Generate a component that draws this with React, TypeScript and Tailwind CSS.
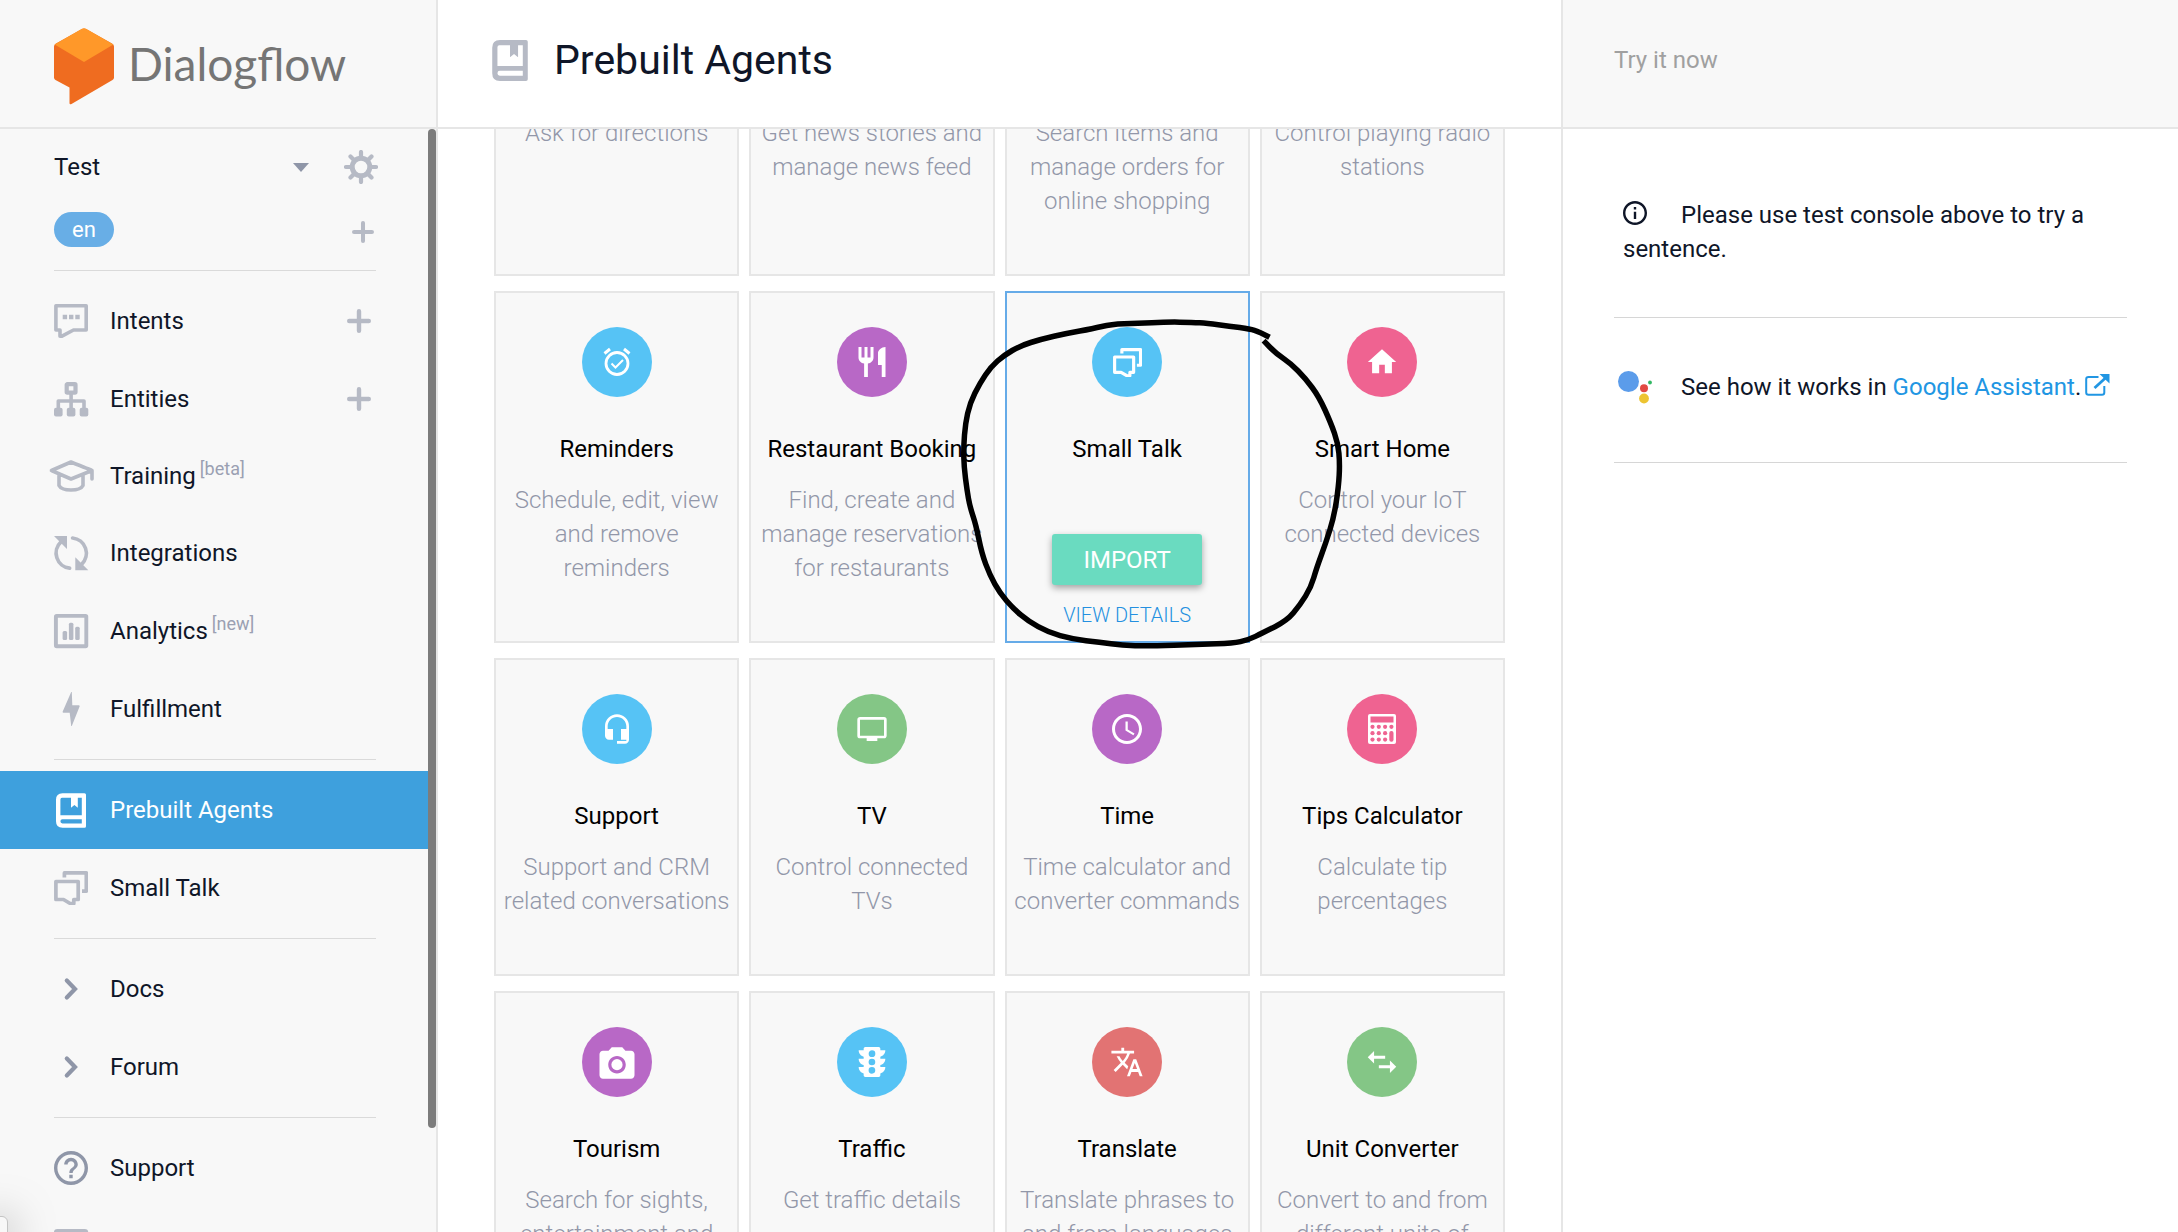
import type { ReactNode } from "react";
import {
  MdHeadsetMic,
  MdHelpOutline,
  MdHome,
  MdInfoOutline,
  MdPersonalVideo,
  MdPhotoCamera,
  MdRestaurant,
  MdSchedule,
  MdSwapHoriz,
  MdTraffic,
  MdTranslate,
} from "react-icons/md";

/* ---------- Icons ---------- */

function LogoMark() {
  return (
    <svg viewBox="0 0 60 87" className="h-[87px] w-[60px] shrink-0" aria-hidden="true">
      <path
        d="M2 25.5 28 11Q30 10 32 11L58 25.5Q60 26.500 60 28.500V59.500Q60 61 58.500 62L17.500 86Q15.500 87 15.500 85V69.500L1.500 62Q0 61 0 59.500V28.500Q0 26.500 2 25.500Z"
        fill="#ef6c20"
      />
      <path d="M.6 26.600 27.500 10.900Q30 9.500 32.500 10.900L59.400 26.600 30 44Z" fill="#ff9829" />
    </svg>
  );
}

function GearIcon() {
  return (
    <svg viewBox="-17 -17 34 34" className="size-[34px]" fill="none" stroke="currentColor" aria-hidden="true">
      <circle r="8.800" strokeWidth="5" />
      <path
        d="M0-10V-15M0 10V15M-10 0H-15M10 0H15M7.500-7.500 10.500-10.500M-7.500-7.500-10.500-10.500M7.500 7.500 10.500 10.500M-7.500 7.500-10.500 10.500"
        strokeWidth="4.200"
        strokeLinecap="round"
      />
    </svg>
  );
}

function PlusIcon({ className }: { className: string }) {
  return (
    <svg viewBox="0 0 24 24" className={className} aria-hidden="true">
      <path d="M12 2.200V21.800M2.200 12H21.800" fill="none" stroke="currentColor" strokeWidth="4.400" strokeLinecap="round" />
    </svg>
  );
}

function NavSvg({ children }: { children: ReactNode }) {
  return (
    <svg viewBox="0 0 34 34" className="size-[34px] overflow-visible" fill="none" stroke="currentColor" aria-hidden="true">
      {children}
    </svg>
  );
}

const IntentsIcon = () => (
  <NavSvg>
    <path d="M1.900 1.800H32.200V26H19.500L8 32.200H6V26H1.900Z" strokeWidth="3.600" strokeLinejoin="round" />
    <path d="M8.700 10.800h4.400v4.400H8.700zM15 10.800h4.400v4.400H15zM21.300 10.800h4.400v4.400h-4.400z" fill="currentColor" stroke="none" />
  </NavSvg>
);

const EntitiesIcon = () => (
  <NavSvg>
    <rect x="12.700" y="2.200" width="8.800" height="8.400" rx=".6" strokeWidth="4.200" />
    <path d="M17.100 12V27M4.300 27V19H30V27" strokeWidth="3.600" strokeLinejoin="round" />
    <g fill="currentColor" stroke="none">
      <rect x="0" y="25.800" width="8.600" height="8.600" rx="2" />
      <rect x="12.800" y="25.800" width="8.600" height="8.600" rx="2" />
      <rect x="25.700" y="25.800" width="8.600" height="8.600" rx="2" />
    </g>
  </NavSvg>
);

const TrainingIcon = () => (
  <NavSvg>
    <path
      d="M-2.500 11.500 17 3Q37 11 38 11.500V20M38 11.500 17 20-2.500 11.500M5 16V26.500C8 32.500 26 32.500 29 26.500V16"
      strokeWidth="3.600"
      strokeLinejoin="round"
      strokeLinecap="round"
    />
  </NavSvg>
);

const IntegrationsIcon = () => (
  <NavSvg>
    <path d="M7 5.800A15.300 15.300 0 0 0 15.600 32.200M18.600 2A15.300 15.300 0 0 1 27.600 28.300" strokeWidth="3.700" strokeLinecap="round" />
    <path d="M0 0H13V13ZM21.300 21.300V34.300H34.300Z" fill="currentColor" stroke="none" />
  </NavSvg>
);

const AnalyticsIcon = () => (
  <NavSvg>
    <rect x="1.900" y="1.900" width="30.400" height="30.400" rx=".8" strokeWidth="3.900" />
    <g fill="currentColor" stroke="none">
      <rect x="8.600" y="17" width="4.500" height="9" rx="1.500" />
      <rect x="14.900" y="8.700" width="4.500" height="17.300" rx="1.500" />
      <rect x="21.200" y="12.800" width="4.500" height="13.200" rx="1.500" />
    </g>
  </NavSvg>
);

const FulfillmentIcon = () => (
  <NavSvg>
    <path d="M17.200 0 8.600 19.700Q8.500 20.700 9.500 20.700H15.700L17.200 34H17.800L25.700 14.300Q25.700 13.300 24.700 13.300H18.300L17.800 0Z" fill="currentColor" stroke="none" />
  </NavSvg>
);

function BookIcon({ className }: { className: string }) {
  return (
    <svg viewBox="0 0 30 34.600" className={className} aria-hidden="true">
      <path
        fillRule="evenodd"
        fill="currentColor"
        d="M6.500 0H28.500Q30 0 30 1.500V33.100Q30 34.600 28.500 34.600H6.500Q0 34.600 0 28.100V6.500Q0 0 6.500 0ZM6 4.500Q4.400 4.500 4.400 6.200V22H25.800V4.500H21.800V14.500L18.400 11.800 15 14.500V4.500ZM6.400 26Q4.400 26 4.400 28.100 4.400 30.200 6.400 30.200H25.800V26Z"
      />
    </svg>
  );
}

function SmallTalkIcon({ className }: { className: string }) {
  return (
    <svg viewBox="0 0 34 34" className={className} fill="none" stroke="currentColor" strokeWidth="3.700" strokeLinejoin="round" aria-hidden="true">
      <path d="M1.900 10.500H24.200V28.500H19.800V32.500H16.200L9.500 28.500H1.900Z" />
      <path d="M10.400 6.500V1.900H32.300V20.200H28" />
    </svg>
  );
}

const ChevronIcon = () => (
  <NavSvg>
    <path d="M12.800 8.500 21 17 12.800 25.500" stroke="#8f96a8" strokeWidth="4.200" strokeLinecap="round" />
  </NavSvg>
);

const AccountIcon = () => (
  <NavSvg>
    <rect x="1.900" y="1.900" width="30.400" height="30.400" rx="1.500" strokeWidth="3.900" />
  </NavSvg>
);

const AlarmIcon = () => (
  <svg viewBox="0 0 28 30" className="h-[30px] w-7" fill="none" stroke="currentColor" aria-hidden="true">
    <circle cx="14" cy="16.500" r="11" strokeWidth="2.800" />
    <path d="M1.500 6.500 7 2M26.500 6.500 21 2" strokeWidth="3" />
    <path d="M8.500 16.500 12.500 20.500 20 13" strokeWidth="2" />
  </svg>
);

const CalculatorIcon = () => (
  <svg viewBox="0 0 28 30" className="h-[30px] w-7" aria-hidden="true">
    <rect width="28" height="30" rx="2" fill="#ffffff" />
    <g fill="#ef6391">
      <rect x="2.500" y="2.500" width="23" height="6" />
      {[12.8, 19.2, 25.6].map((cy) =>
        [4.5, 10.8, 17.1].map((cx) => <circle key={`${cx}-${cy}`} cx={cx} cy={cy} r="2.100" />),
      )}
      <circle cx="23.400" cy="12.800" r="2.100" />
      <rect x="21.300" y="17.100" width="4.200" height="10.600" rx="2" />
    </g>
  </svg>
);

const AssistantIcon = () => (
  <svg viewBox="0 0 34 33" className="h-[33px] w-[34px] shrink-0" aria-hidden="true">
    <circle cx="10.500" cy="10.500" r="10.500" fill="#5b9cea" />
    <circle cx="26" cy="17.200" r="4" fill="#e24a43" />
    <circle cx="26" cy="27.500" r="4.900" fill="#edc431" />
    <circle cx="32" cy="11.500" r="1.900" fill="#33b864" />
  </svg>
);

const ExternalIcon = () => (
  <svg viewBox="0 0 25 22" className="ml-1 inline h-[22px] w-[25px] align-[-1px]" aria-hidden="true">
    <path d="M13.500 3H3.500Q1.200 3 1.200 5.300V18.500Q1.200 20.800 3.500 20.800H17Q19.300 20.800 19.300 18.500V12" fill="none" stroke="currentColor" strokeWidth="2" />
    <path d="M9.500 14 21 3.500" stroke="currentColor" strokeWidth="2.800" />
    <path d="M14.500 0H24.500V9.500Z" fill="currentColor" />
  </svg>
);

/* ---------- Hand-drawn marker ring ---------- */

const ringPoints: [number, number][] = [
  [1268.5, 337.3], [1258, 331.7], [1249, 329], [1228.5, 326], [1206, 323.3], [1191.5, 322.3], [1165.6, 322],
  [1136, 323.3], [1110, 324.3], [1091.7, 328.7], [1065.8, 333.3], [1040, 339.3], [1019.5, 345.7], [1003, 355.3],
  [990, 366.7], [978.8, 383.3], [968.9, 403.3], [964.4, 423.3], [962.6, 446.7], [963, 466.7], [966, 490],
  [968.9, 506.7], [975, 525], [980.7, 553.3], [988.8, 575], [999, 593.3], [1012, 608.3], [1027, 621],
  [1047.3, 632.3], [1071, 639], [1099, 642.3], [1121, 645.3], [1147, 646], [1199, 644.3], [1232, 643.3],
  [1247, 640], [1262, 632.7], [1286, 620.7], [1299, 605], [1310, 587.3], [1315.5, 568.3], [1324.7, 543.3],
  [1333, 516.7], [1337.6, 486.7], [1338.8, 463.3], [1337, 443.3], [1330, 423.3], [1318, 396.7], [1304.3, 378.3],
  [1289.5, 363.3], [1274.8, 353.3], [1262.6, 340.7],
];

function smoothPath(points: [number, number][]) {
  let d = `M${points[0].join(" ")}`;
  for (let i = 1; i < points.length - 1; i++) {
    const [x, y] = points[i];
    const [nx, ny] = points[i + 1];
    d += `Q${x} ${y} ${(x + nx) / 2} ${(y + ny) / 2}`;
  }
  return `${d}L${points[points.length - 1].join(" ")}`;
}

function MarkerRing() {
  return (
    <svg
      viewBox="957 316 387 336"
      className="pointer-events-none absolute top-[23px] left-[-49px] z-10 h-[336px] w-[387px] max-w-none"
      aria-hidden="true"
    >
      <path d={smoothPath(ringPoints)} fill="none" stroke="#000000" strokeWidth="5.500" strokeLinejoin="round" />
    </svg>
  );
}

/* ---------- Sidebar ---------- */

type NavItem = { label: string; icon: ReactNode; tag?: string; add?: boolean; active?: boolean; short?: boolean };

const navGroups: NavItem[][] = [
  [
    { label: "Intents", icon: <IntentsIcon />, add: true },
    { label: "Entities", icon: <EntitiesIcon />, add: true },
    { label: "Training", icon: <TrainingIcon />, tag: "[beta]", short: true },
    { label: "Integrations", icon: <IntegrationsIcon /> },
    { label: "Analytics", icon: <AnalyticsIcon />, tag: "[new]" },
    { label: "Fulfillment", icon: <FulfillmentIcon /> },
  ],
  [
    { label: "Prebuilt Agents", icon: <BookIcon className="h-[35px] w-[30px]" />, active: true },
    { label: "Small Talk", icon: <SmallTalkIcon className="size-[34px]" /> },
  ],
  [
    { label: "Docs", icon: <ChevronIcon /> },
    { label: "Forum", icon: <ChevronIcon /> },
  ],
  [{ label: "Support", icon: <MdHelpOutline viewBox="2 2 20 20" className="size-[34px] text-[#8f96a8]" /> }],
];

function NavRow({ item }: { item: NavItem }) {
  return (
    <li
      className={`flex items-center pr-[57px] pl-[54px] ${item.short ? "h-[76px]" : "h-[78px]"} ${
        item.active ? "bg-[#3ea0dd] text-white" : ""
      }`}
    >
      <a href="#" className="flex h-full flex-1 items-center gap-[22px]">
        <span className={`flex w-[34px] justify-center ${item.active ? "text-white" : "text-[#b6bac5]"}`}>{item.icon}</span>
        <span className="whitespace-nowrap">
          {item.label}
          {item.tag && <sup className="ml-1 text-[18px] text-[#9ba0b2]">{item.tag}</sup>}
        </span>
      </a>
      {item.add && (
        <button type="button" aria-label={`Create ${item.label}`} className="text-[#b6bac5]">
          <PlusIcon className="size-6" />
        </button>
      )}
    </li>
  );
}

function Divider() {
  return <hr className="my-[11px] mr-[52px] ml-[54px] h-px border-0 bg-[#dadada]" />;
}

function Sidebar() {
  return (
    <aside className="flex w-[438px] shrink-0 flex-col border-r-2 border-[#e6e6e6] bg-[#f8f8f8]">
      <div className="flex h-[129px] shrink-0 items-center gap-[14px] border-b-2 border-[#e6e6e6] pb-1 pl-[54px]">
        <LogoMark />
        <span className="pt-1 font-[Lato,sans-serif] text-[46px] text-[#757575]">Dialogflow</span>
      </div>
      <div className="flex min-h-0 flex-1">
        <div className="min-w-0 flex-1 overflow-hidden">
          <div className="flex h-14 items-center pt-5 pr-[50px] pl-[54px]">
            <button type="button" className="flex flex-1 items-center justify-between text-left">
              Test
              <svg viewBox="0 0 16 9" className="mr-[35px] h-[9px] w-4" aria-hidden="true">
                <path d="M0 0H16L8 9Z" fill="#8f96a8" />
              </svg>
            </button>
            <button type="button" aria-label="Agent settings" className="text-[#b6bac5]">
              <GearIcon />
            </button>
          </div>
          <div className="mt-[27px] flex h-[35px] items-center justify-between pr-[54px] pl-[54px]">
            <button type="button" className="flex h-[35px] w-[60px] items-center justify-center rounded-full bg-[#68aee6] text-[22px] text-white">
              en
            </button>
            <button type="button" aria-label="Add language" className="pt-1 text-[#b6bac5]">
              <PlusIcon className="size-[22px]" />
            </button>
          </div>
          <nav className="pt-3">
            {navGroups.map((group, i) => (
              <div key={i}>
                <Divider />
                <ul>
                  {group.map((item) => (
                    <NavRow key={item.label} item={item} />
                  ))}
                </ul>
              </div>
            ))}
            <a href="#" aria-label="Account" className="flex h-[78px] items-center pl-[54px] text-[#b6bac5]">
              <AccountIcon />
            </a>
          </nav>
        </div>
        <div className="w-2 shrink-0">
          <div className="h-[90.6%] rounded-full bg-[#7c7c7c]" />
        </div>
      </div>
    </aside>
  );
}

/* ---------- Agent cards ---------- */

type Agent = { name: string; text: string; color: string; icon: ReactNode };

const clippedRow = [
  "Ask for directions",
  "Get news stories and manage news feed",
  "Search items and manage orders for online shopping",
  "Control playing radio stations",
];

const agents: Agent[] = [
  { name: "Reminders", text: "Schedule, edit, view and remove reminders", color: "bg-[#56c3f5]", icon: <AlarmIcon /> },
  { name: "Restaurant Booking", text: "Find, create and manage reservations for restaurants", color: "bg-[#b868c6]", icon: <MdRestaurant className="size-9" /> },
  { name: "Small Talk", text: "", color: "bg-[#56c3f5]", icon: <SmallTalkIcon className="size-[29px]" /> },
  { name: "Smart Home", text: "Control your IoT connected devices", color: "bg-[#ef6391]", icon: <MdHome className="size-[34px]" /> },
  { name: "Support", text: "Support and CRM related conversations", color: "bg-[#56c3f5]", icon: <MdHeadsetMic className="size-8" /> },
  { name: "TV", text: "Control connected TVs", color: "bg-[#84c686]", icon: <MdPersonalVideo className="size-8" /> },
  { name: "Time", text: "Time calculator and converter commands", color: "bg-[#b868c6]", icon: <MdSchedule className="size-9" /> },
  { name: "Tips Calculator", text: "Calculate tip percentages", color: "bg-[#ef6391]", icon: <CalculatorIcon /> },
  { name: "Tourism", text: "Search for sights, entertainment and", color: "bg-[#b868c6]", icon: <MdPhotoCamera viewBox="0 -1.500 24 24" className="size-[42px]" /> },
  { name: "Traffic", text: "Get traffic details", color: "bg-[#56c3f5]", icon: <MdTraffic className="size-10" /> },
  { name: "Translate", text: "Translate phrases to and from languages", color: "bg-[#e27373]", icon: <MdTranslate className="size-[34px]" /> },
  { name: "Unit Converter", text: "Convert to and from different units of", color: "bg-[#84c686]", icon: <MdSwapHoriz className="size-[38px] -scale-x-100" /> },
];

function AgentCard({ agent }: { agent: Agent }) {
  const hovered = agent.name === "Small Talk";
  return (
    <article
      className={`relative flex flex-col items-center border-2 bg-[#f8f8f8] px-1 pt-[34px] text-center ${
        hovered ? "border-[#66abe8] pb-3" : "border-[#e6e6e6] pb-[56px]"
      }`}
    >
      <div className={`flex size-[70px] items-center justify-center rounded-full text-white ${agent.color}`}>{agent.icon}</div>
      <h2 className="mt-[35px] text-black">{agent.name}</h2>
      {hovered ? (
        <>
          <button
            type="button"
            className="mt-[68px] h-[51px] w-[150px] rounded-[3px] bg-[#6adbc0] text-white shadow-[0_3px_7px_rgba(0,0,0,0.35)]"
          >
            IMPORT
          </button>
          <a href="#" className="mt-4 text-[20px] leading-[28px] font-light text-[#2490e0]">
            VIEW DETAILS
          </a>
          <MarkerRing />
        </>
      ) : (
        <p className="mt-[17px] font-light text-[#9297a9]">{agent.text}</p>
      )}
    </article>
  );
}

function Main() {
  return (
    <main className="flex min-w-0 flex-1 flex-col bg-white">
      <header className="flex h-[129px] shrink-0 items-center gap-[26px] border-b-2 border-[#e6e6e6] pb-[7px] pl-[54px]">
        <BookIcon className="h-[41px] w-9 text-[#b6bac5]" />
        <h1 className="text-[41px] leading-[48px]">Prebuilt Agents</h1>
      </header>
      <div className="min-h-0 flex-1 overflow-hidden px-[56px]">
        <div className="-mt-[15px] grid grid-cols-4 gap-x-[10px] gap-y-[15px]">
          {clippedRow.map((text) => (
            <article key={text} className="border-2 border-[#e6e6e6] bg-[#f8f8f8] px-1 pb-[56px] text-center">
              <p className="font-light text-[#9297a9]">{text}</p>
            </article>
          ))}
          {agents.map((agent) => (
            <AgentCard key={agent.name} agent={agent} />
          ))}
        </div>
      </div>
    </main>
  );
}

/* ---------- Test console ---------- */

function TestConsole() {
  return (
    <aside className="flex w-[617px] shrink-0 flex-col border-l-2 border-[#e6e6e6] bg-white">
      <div className="flex h-[129px] shrink-0 items-center border-b-2 border-[#e6e6e6] bg-[#f8f8f8] px-[51px] pb-[7px]">
        <input
          type="text"
          aria-label="Try it now"
          placeholder="Try it now"
          className="w-full bg-transparent outline-none placeholder:text-[#a0a0a0]"
        />
      </div>
      <div className="px-[51px]">
        <p className="border-b border-[#d6d6d6] pt-[69px] pr-2 pb-[51px] pl-[9px]">
          <MdInfoOutline viewBox="2 2 20 20" className="mr-[34px] inline size-6 align-[-2px]" />
          Please use test console above to try a sentence.
        </p>
        <div className="flex items-center gap-[29px] border-b border-[#d6d6d6] pt-[52px] pb-[58px] pl-1">
          <AssistantIcon />
          <p className="whitespace-nowrap">
            See how it works in{" "}
            <a href="#" className="text-[#2196e3]">
              Google Assistant
            </a>
            .
            <a href="#" aria-label="Open Google Assistant" className="text-[#2196e3]">
              <ExternalIcon />
            </a>
          </p>
        </div>
      </div>
    </aside>
  );
}

export default function App() {
  return (
    <div className="relative flex h-screen overflow-hidden font-[Roboto,sans-serif] text-[24px] leading-[34px] text-[#0f1628]">
      <Sidebar />
      <Main />
      <TestConsole />
      <div className="absolute -bottom-2 -left-4 h-6 w-6 rounded-md border border-[#c4c4c4] bg-[#f8f8f8] shadow-[0_6px_44px_rgba(0,0,0,0.5)]" />
    </div>
  );
}
